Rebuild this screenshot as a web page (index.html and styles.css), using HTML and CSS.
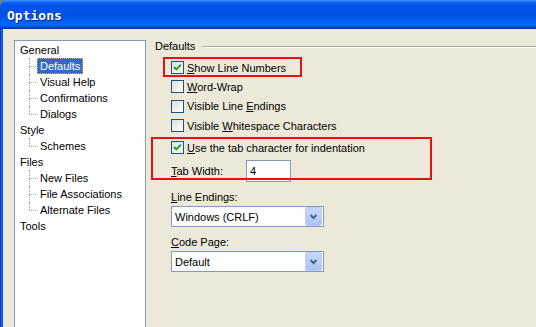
FILE: index.html
```html
<!DOCTYPE html>
<html lang="en">
<head>
  <meta charset="UTF-8" />
  <title>Options</title>
  <link rel="stylesheet" href="styles.css">
</head>
<body>
  <div class="window">
    <div class="titlebar">Options</div>
    <div class="frame">
      <div class="edge"></div>
      <div class="client">
        <ul class="tree">
          <li>
            <div class="row"><span class="label">General</span></div>
            <ul class="children">
              <li class="child selected"><span class="label">Defaults</span></li>
              <li class="child"><span class="label">Visual Help</span></li>
              <li class="child"><span class="label">Confirmations</span></li>
              <li class="child"><span class="label">Dialogs</span></li>
            </ul>
          </li>
          <li>
            <div class="row"><span class="label">Style</span></div>
            <ul class="children">
              <li class="child"><span class="label">Schemes</span></li>
            </ul>
          </li>
          <li>
            <div class="row"><span class="label">Files</span></div>
            <ul class="children">
              <li class="child"><span class="label">New Files</span></li>
              <li class="child"><span class="label">File Associations</span></li>
              <li class="child"><span class="label">Alternate Files</span></li>
            </ul>
          </li>
          <li>
            <div class="row"><span class="label">Tools</span></div>
          </li>
        </ul>

        <div class="panel">
          <div class="group-title"><span>Defaults</span></div>
          <div class="checks">
            <label class="check">
              <span class="box"><svg width="11" height="11" viewBox="0 0 11 11"><polyline points="2,5 4.3,7.4 9,2.6" /></svg></span>
              <span><u>S</u>how Line Numbers</span>
            </label>
            <label class="check">
              <span class="box"></span>
              <span><u>W</u>ord-Wrap</span>
            </label>
            <label class="check">
              <span class="box"></span>
              <span>Visible Line <u>E</u>ndings</span>
            </label>
            <label class="check">
              <span class="box"></span>
              <span>Visible <u>W</u>hitespace Characters</span>
            </label>
          </div>
          <div class="tab-group">
            <label class="check">
              <span class="box"><svg width="11" height="11" viewBox="0 0 11 11"><polyline points="2,5 4.3,7.4 9,2.6" /></svg></span>
              <span><u>U</u>se the tab character for indentation</span>
            </label>
            <div class="field-row">
              <span class="field-name"><u>T</u>ab Width:</span>
              <span class="textbox">4</span>
            </div>
          </div>
          <div class="field-label"><u>L</u>ine Endings:</div>
          <div class="combo">
            <span>Windows (CRLF)</span>
            <span class="drop"><svg width="15" height="17" viewBox="0 0 15 17"><polyline points="4.5,7 7.5,10 10.5,7" /></svg></span>
          </div>
          <div class="field-label"><u>C</u>ode Page:</div>
          <div class="combo">
            <span>Default</span>
            <span class="drop"><svg width="15" height="17" viewBox="0 0 15 17"><polyline points="4.5,7 7.5,10 10.5,7" /></svg></span>
          </div>
        </div>
      </div>
    </div>
    <div class="mark mark-a"></div>
    <div class="mark mark-b"></div>
  </div>
</body>
</html>
```

FILE: styles.css
```css
body {
  margin: 0;
  background: #7f7f7f;
  font-family: 'Liberation Sans', Arial, sans-serif;
  font-size: 11px;
  color: #000;
}
.window {
  position: relative;
  width: 536px;
  height: 327px;
  overflow: hidden;
  display: flex;
  flex-direction: column;
  border-top-left-radius: 7px;
}
.titlebar {
  height: 29px;
  box-sizing: border-box;
  padding: 8px 0 0 7px;
  flex-shrink: 0;
  background: linear-gradient(to bottom, #3d95ff 0, #2a82fb 1px, #0a5cf0 3px, #0055e8 6px, #0052e0 16px, #0062f9 22px, #0066ff 25px, #0051e6 27px, #0037b8 28px, #0037b8 29px);
  color: #fff;
  font-family: 'DejaVu Sans Mono', monospace;
  font-weight: bold;
  font-size: 13px;
  line-height: 15px;
  text-shadow: 1px 1px #0a1e86;
}
.frame {
  flex: 1;
  display: flex;
  background: #ece9d8;
}
.edge {
  width: 3px;
  flex-shrink: 0;
  background: linear-gradient(to right, #0831d9 0 1px, #166aee 1px 2px, #0855dd 2px 3px);
}
.client {
  flex: 1;
  display: flex;
  align-items: flex-start;
  padding: 11px 0 0 11px;
}

/* tree */
.tree {
  list-style: none;
  margin: 0;
  width: 132px;
  height: 320px;
  box-sizing: border-box;
  padding: 1px 0 0 2px;
  background: #fff;
  border: 1px solid #7f9db9;
  flex-shrink: 0;
}
.tree ul {
  list-style: none;
  margin: 0;
  padding: 0;
}
.row {
  height: 16px;
}
.label {
  display: inline-block;
  line-height: 14px;
  padding: 0 2px;
  border: 1px solid transparent;
  white-space: nowrap;
}
.child {
  position: relative;
  height: 16px;
  padding-left: 20px;
}
.child::before {
  content: '';
  position: absolute;
  left: 12px;
  top: 8px;
  width: 7px;
  border-top: 1px dotted #a8a797;
}
.child::after {
  content: '';
  position: absolute;
  left: 12px;
  top: 0;
  height: 16px;
  border-left: 1px dotted #a8a797;
}
.child:last-child::after {
  height: 8px;
}
.selected .label {
  background: #316ac5;
  color: #fff;
  border: 1px dotted #e8a33c;
}

/* right side */
.panel {
  flex: 1;
  padding-left: 9px;
}
.group-title {
  display: flex;
  align-items: center;
  gap: 7px;
  line-height: 13px;
}
.group-title::after {
  content: '';
  flex: 1;
  border-top: 1px solid #aca899;
  border-bottom: 1px solid #fff;
}
.checks {
  display: flex;
  flex-direction: column;
  gap: 6.4px;
  margin: 8px 0 0 16px;
}
.check {
  display: flex;
  align-items: center;
  gap: 3px;
  height: 13px;
  white-space: nowrap;
}
.box {
  width: 13px;
  height: 13px;
  box-sizing: border-box;
  border: 1px solid #1c5180;
  background: linear-gradient(135deg, #dcdcd7 0%, #f2f2ef 55%, #fff 100%);
  flex-shrink: 0;
}
.box svg {
  display: block;
}
.box polyline {
  fill: none;
  stroke: #21a121;
  stroke-width: 2;
}
.tab-group {
  margin: 9px 0 0 16px;
}
.field-row {
  display: flex;
  align-items: center;
  margin-top: 6px;
}
.field-name {
  width: 75px;
}
.textbox {
  width: 45px;
  height: 22px;
  box-sizing: border-box;
  border: 1px solid #7f9db9;
  background: #fff;
  padding-left: 3px;
  line-height: 20px;
}
.field-label {
  margin: 9px 0 0 16px;
  line-height: 13px;
}
.combo {
  display: flex;
  align-items: center;
  justify-content: space-between;
  width: 153px;
  height: 21px;
  box-sizing: border-box;
  margin: 2px 0 0 16px;
  padding: 0 1px 0 3px;
  border: 1px solid #7f9db9;
  background: #fff;
}
.drop {
  width: 15px;
  height: 17px;
  border-radius: 2px;
  background: linear-gradient(to bottom, #c6d6fd 0%, #b8ccf8 60%, #aec3f4 100%);
  border: 1px solid #bccdf5;
  box-sizing: content-box;
}
.drop svg {
  display: block;
}
.drop polyline {
  fill: none;
  stroke: #4d6185;
  stroke-width: 2;
}

/* annotation boxes */
.mark {
  position: absolute;
  box-sizing: border-box;
  border: 2px solid #e81010;
}
.mark-a {
  left: 163px;
  top: 57px;
  width: 139px;
  height: 20px;
}
.mark-b {
  left: 151px;
  top: 137px;
  width: 281px;
  height: 43px;
}
```
